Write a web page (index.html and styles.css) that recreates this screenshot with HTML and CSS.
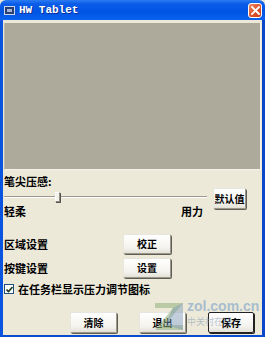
FILE: index.html
```html
<!DOCTYPE html>
<html>
<head>
<meta charset="utf-8">
<link rel="stylesheet" href="styles.css">
</head>
<body>
<div class="window">
  <div class="titlebar">
    <div class="ticon"><span></span></div>
    <div class="ttext">HW Tablet</div>
    <div class="close">
      <svg width="9" height="9" viewBox="0 0 9 9"><path d="M1 1L8 8M8 1L1 8" stroke="#fff" stroke-width="1.8" stroke-linecap="square"/></svg>
    </div>
  </div>
  <div class="client">
    <div class="canvas"></div>
    <div class="pgrid">
      <div class="plabel">笔尖压感:</div>
      <div class="slider"><div class="track"></div><div class="thumb"></div></div>
      <button class="btn bdefault">默认值</button>
      <div class="ends"><span>轻柔</span><span>用力</span></div>
    </div>
    <div class="srow first"><span class="slabel">区域设置</span><button class="btn bset">校正</button></div>
    <div class="srow"><span class="slabel">按键设置</span><button class="btn bset">设置</button></div>
    <div class="check"><span class="box"><svg width="7" height="7" viewBox="0 0 7 7"><path d="M0.5 3.5L2.5 5.5L6.5 1" fill="none" stroke="#1d3a1d" stroke-width="1.6"/></svg></span><span>在任务栏显示压力调节图标</span></div>
    <div class="actions">
      <button class="btn bact">清除</button>
      <button class="btn bact">退出</button>
      <button class="btn bact bfocus">保存</button>
    </div>
    <div class="wm">
      <svg class="wmlogo" width="32" height="30" viewBox="0 0 32 30"><path d="M2 2H30L12 24H30V29H2L20 7H2Z" fill="#8fb07a" opacity="0.55"/><path d="M20 7L30 2V29L12 24Z" fill="#7d97b8" opacity="0.45"/></svg>
      <div class="wmtext">
        <div class="wmurl">zol.com.cn</div>
        <div class="wmcn">中关村在线</div>
      </div>
    </div>
  </div>
</div>
</body>
</html>
```
FILE: styles.css
```css
html, body { margin: 0; padding: 0; }
body { width: 265px; height: 337px; overflow: hidden; background: #ECE9D8; }
.window { width: 265px; height: 337px; display: flex; flex-direction: column; position: relative; font-family: "Noto Sans CJK SC", "Liberation Sans", sans-serif; }
.titlebar { height: 20px; flex: none; display: flex; align-items: center; background: linear-gradient(#2b7bf2 0%, #0a5ce8 20%, #0054e3 60%, #0a62f0 100%); border-radius: 6px 6px 0 0; padding: 0 3px; position: relative; }
.ticon { width: 9px; height: 7px; background: #2c3f6d; border: 1px solid #c8d6ee; margin-left: 1px; display: flex; align-items: center; justify-content: center; }
.ticon span { width: 5px; height: 3px; background: #9fb5d9; }
.ttext { color: #fff; font-family: "Liberation Mono", "DejaVu Sans Mono", monospace; font-weight: bold; font-size: 11px; margin-left: 4px; text-shadow: 1px 1px #0a2f9a; }
.close { position: absolute; right: 3px; top: 3px; width: 12px; height: 13px; border: 1px solid #fff; border-radius: 3px; background: linear-gradient(135deg, #f08a6a, #e0552d 50%, #c9401f); display: flex; align-items: center; justify-content: center; }
.client { flex: 1; background: #ECE9D8; border-left: 3px solid #0a55e0; border-right: 3px solid #0a46c8; border-bottom: 2px solid #0a4cd0; padding: 3px 1px 0 1px; position: relative; }
.canvas { height: 147px; background: #ADA99B; border-left: 1px solid #bdb9ab; border-right: 1px solid #f6f5ef; border-bottom: 1px solid #f4f3ec; box-sizing: border-box; }
.pgrid { display: grid; grid-template-columns: 203px 33px; column-gap: 6px; grid-template-rows: 14px 17px 13px; margin-top: 4px; font-size: 11px; font-weight: bold; color: #000; }
.plabel { grid-column: 1 / 3; line-height: 14px; }
.slider { grid-column: 1; grid-row: 2; position: relative; }
.track { position: absolute; left: 0; right: 0; top: 8px; height: 1px; background: #9d9a8d; border-bottom: 1px solid #fff; }
.thumb { position: absolute; left: 51px; top: 4px; width: 3px; height: 8px; background: #f3f2ec; border: 1px solid #8c8a80; border-top-color: #fff; border-left-color: #fff; box-shadow: 1px 1px 0 #55544e; }
.bdefault { grid-column: 2; grid-row: 2 / 4; margin-top: -4px; width: 33px; height: 21px; }
.ends { grid-column: 1; grid-row: 3; display: flex; justify-content: space-between; width: 199px; line-height: 13px; }
.btn { font-family: "Noto Sans CJK SC", sans-serif; font-weight: bold; font-size: 10px; color: #000; padding: 0; margin: 0; background: linear-gradient(#ffffff, #f4f3ee 70%, #e3e1d6); border: 1px solid #9a988b; border-top-color: #e6e5de; border-left-color: #e6e5de; border-radius: 2px; box-shadow: 1px 1px 0 #5f5d54; display: flex; align-items: center; justify-content: center; line-height: 1; }
.srow { display: flex; align-items: center; height: 20px; font-size: 11px; font-weight: bold; margin-top: 4px; }
.srow.first { margin-top: 16px; }
.slabel { width: 119px; }
.bset { width: 48px; height: 20px; }
.check { display: flex; align-items: center; height: 14px; margin-top: 4px; font-size: 11px; font-weight: bold; }
.box { width: 8px; height: 8px; border: 1px solid #1c5180; background: #fff; margin-right: 4px; display: flex; align-items: center; justify-content: center; }
.actions { display: flex; margin-top: 16px; padding-left: 66px; gap: 22px; }
.bact { width: 47px; height: 21px; }
.bfocus { border: 1px solid #222; box-shadow: 1px 1px 0 #222; width: 46px; }
.wm { position: absolute; left: 150px; top: 279px; display: flex; align-items: flex-start; pointer-events: none; }
.wmlogo { margin-top: 2px; }
.wmtext { margin-left: 2px; }
.wmurl { font-family: "Liberation Sans", sans-serif; font-size: 14px; font-weight: bold; color: rgba(120,160,200,0.6); line-height: 15px; }
.wmcn { font-size: 9px; color: rgba(140,160,185,0.6); line-height: 11px; margin-top: 2px; }
```
